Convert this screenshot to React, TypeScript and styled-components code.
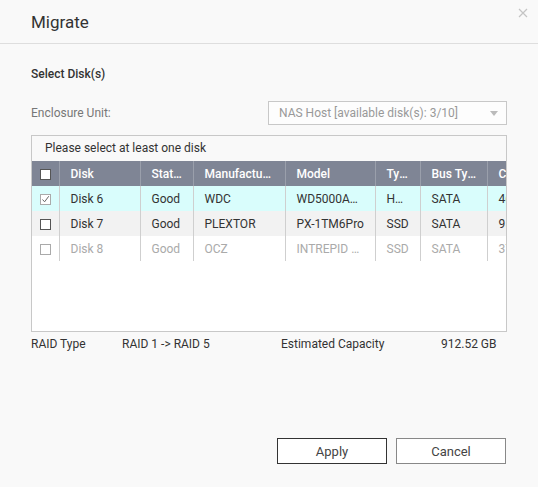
import styled, { createGlobalStyle } from 'styled-components';

const GlobalStyle = createGlobalStyle`
  html, body {
    margin: 0;
    padding: 0;
    background: #f9f9f9;
  }
  body {
    font-family: Roboto, "Liberation Sans", sans-serif;
    color: #333;
  }
`;

const Dialog = styled.div`
  width: 538px;
  height: 487px;
  background: #f9f9f9;
  position: relative;
  overflow: hidden;
`;

const Header = styled.div`
  height: 43px;
  display: flex;
  align-items: center;
  padding-left: 31px;
  border-bottom: 1px solid #dedede;
  font-size: 17px;
  color: #333;
`;

const Close = styled.button`
  position: absolute;
  top: 6px;
  right: 8px;
  width: 14px;
  height: 14px;
  padding: 0;
  border: none;
  background: none;
  display: flex;
`;

const Body = styled.div`
  padding: 0 31px;
`;

const SectionTitle = styled.div`
  font-size: 12px;
  font-weight: 500;
  margin-top: 23px;
  height: 15px;
  line-height: 15px;
`;

const FieldRow = styled.div`
  display: flex;
  align-items: center;
  justify-content: space-between;
  margin-top: 19px;
`;

const Label = styled.span`
  font-size: 12px;
  color: #777;
`;

const Select = styled.div`
  width: 239px;
  height: 24px;
  box-sizing: border-box;
  border: 1px solid #c8c8c8;
  background: #fdfdfd;
  display: flex;
  align-items: center;
  justify-content: space-between;
  padding: 0 8px 0 10px;
  font-size: 12px;
  color: #999;
`;

const Arrow = styled.span`
  width: 0;
  height: 0;
  border-left: 4px solid transparent;
  border-right: 4px solid transparent;
  border-top: 5px solid #bbb;
`;

const TableBox = styled.div`
  margin-top: 10px;
  height: 197px;
  box-sizing: border-box;
  border: 1px solid #c8c8c8;
  background: #fff;
  overflow: hidden;
`;

const Caption = styled.div`
  height: 25px;
  line-height: 25px;
  padding-left: 13px;
  font-size: 12px;
  color: #333;
  background: #f9f9f9;
`;

const Table = styled.table`
  border-collapse: collapse;
  table-layout: fixed;
  width: 536px;
  font-size: 12px;
`;

const Th = styled.th<{ $w: number }>`
  width: ${p => p.$w}px;
  height: 25px;
  box-sizing: border-box;
  padding: 0 10px 0 11px;
  text-align: left;
  font-weight: 500;
  color: #fff;
  background: #7f8595;
  border-left: 1px solid #9a9fab;
  white-space: nowrap;
  overflow: hidden;
  text-overflow: ellipsis;
  &:first-child {
    border-left: none;
    padding: 0;
    text-align: center;
  }
`;

const Row = styled.tr<{ $tone: 'selected' | 'alt' | 'disabled' }>`
  background: ${p => (p.$tone === 'selected' ? '#d9fdfc' : p.$tone === 'alt' ? '#f2f2f2' : '#fff')};
  color: ${p => (p.$tone === 'disabled' ? '#aaa' : '#333')};
`;

const Td = styled.td`
  height: 25px;
  box-sizing: border-box;
  padding: 0 10px 0 11px;
  border-left: 1px solid #cfcfcf;
  white-space: nowrap;
  overflow: hidden;
  text-overflow: ellipsis;
  &:first-child {
    border-left: none;
    padding: 0;
    text-align: center;
  }
`;

const Check = styled.span<{ $muted?: boolean }>`
  display: inline-block;
  vertical-align: middle;
  width: 11px;
  height: 11px;
  box-sizing: border-box;
  border: 1px solid ${p => (p.$muted ? '#aaa' : '#555')};
  background: #fff;
  position: relative;
`;

const Summary = styled.div`
  display: grid;
  grid-template-columns: 91px 159px 160px auto;
  margin-top: 5px;
  font-size: 12px;
  color: #333;
  height: 14px;
  line-height: 14px;
`;

const Footer = styled.div`
  display: flex;
  justify-content: flex-end;
  gap: 9px;
  padding-right: 32px;
  margin-top: 87px;
`;

const Button = styled.button<{ $primary?: boolean }>`
  width: 110px;
  height: 26px;
  background: #fff;
  border: 1px solid ${p => (p.$primary ? '#333' : '#888')};
  font-family: Roboto, "Liberation Sans", sans-serif;
  font-size: 13px;
  color: #444;
  padding: 0;
`;

const columns = [
  { name: '', w: 27 },
  { name: 'Disk', w: 81 },
  { name: 'Status', w: 53 },
  { name: 'Manufacturer', w: 92 },
  { name: 'Model', w: 90 },
  { name: 'Type', w: 45 },
  { name: 'Bus Type', w: 67 },
  { name: 'Capacity', w: 81 },
];

const rows = [
  { tone: 'selected' as const, checked: true, cells: ['Disk 6', 'Good', 'WDC', 'WD5000AAKX', 'HDD', 'SATA', '465.76 GB'] },
  { tone: 'alt' as const, checked: false, cells: ['Disk 7', 'Good', 'PLEXTOR', 'PX-1TM6Pro', 'SSD', 'SATA', '953.87 GB'] },
  { tone: 'disabled' as const, checked: false, cells: ['Disk 8', 'Good', 'OCZ', 'INTREPID 3800', 'SSD', 'SATA', '372.61 GB'] },
];

const CheckMark = () => (
  <svg width="9" height="9" viewBox="0 0 9 9" style={{ position: 'absolute', left: 0, top: 0 }}>
    <path d="M1.5 4.5 L3.6 6.8 L7.8 1.2" fill="none" stroke="#666" strokeWidth="1" />
  </svg>
);

export default function App() {
  return (
    <>
      <GlobalStyle />
      <Dialog>
        <Header>Migrate</Header>
        <Close aria-label="close">
          <svg width="14" height="14" viewBox="0 0 14 14">
            <path d="M3 3 L11 11 M11 3 L3 11" stroke="#c4c4c4" strokeWidth="1.2" />
          </svg>
        </Close>
        <Body>
          <SectionTitle>Select Disk(s)</SectionTitle>
          <FieldRow>
            <Label>Enclosure Unit:</Label>
            <Select>
              NAS Host [available disk(s): 3/10]
              <Arrow />
            </Select>
          </FieldRow>
          <TableBox>
            <Caption>Please select at least one disk</Caption>
            <Table>
              <thead>
                <tr>
                  {columns.map((c, i) => (
                    <Th key={i} $w={c.w}>
                      {i === 0 ? <Check /> : c.name}
                    </Th>
                  ))}
                </tr>
              </thead>
              <tbody>
                {rows.map((r, i) => (
                  <Row key={i} $tone={r.tone}>
                    <Td>
                      <Check $muted={r.tone === 'disabled' || r.checked}>
                        {r.checked && <CheckMark />}
                      </Check>
                    </Td>
                    {r.cells.map((c, j) => (
                      <Td key={j}>{c}</Td>
                    ))}
                  </Row>
                ))}
              </tbody>
            </Table>
          </TableBox>
          <Summary>
            <span>RAID Type</span>
            <span>RAID 1 -&gt; RAID 5</span>
            <span>Estimated Capacity</span>
            <span>912.52 GB</span>
          </Summary>
        </Body>
        <Footer>
          <Button $primary>Apply</Button>
          <Button>Cancel</Button>
        </Footer>
      </Dialog>
    </>
  );
}
